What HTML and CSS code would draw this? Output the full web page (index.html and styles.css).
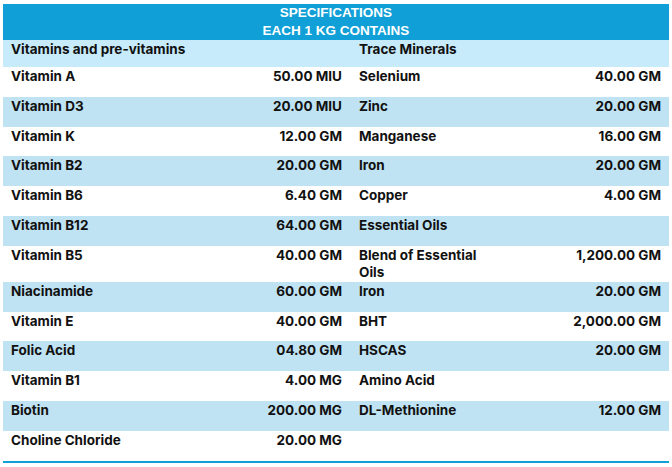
FILE: index.html
```html
<!DOCTYPE html>
<html>
<head>
<meta charset="utf-8">
<link rel="stylesheet" href="styles.css">
</head>
<body>
<div class="sheet">
  <div class="title">
    <div>SPECIFICATIONS</div>
    <div>EACH 1 KG CONTAINS</div>
  </div>
  <div class="row sub">
    <div class="name">Vitamins and pre-vitamins</div><div class="val"></div>
    <div class="name">Trace Minerals</div><div class="val"></div>
  </div>
  <div class="row">
    <div class="name">Vitamin A</div><div class="val">50.00 MIU</div>
    <div class="name">Selenium</div><div class="val">40.00 GM</div>
  </div>
  <div class="row band">
    <div class="name">Vitamin D3</div><div class="val">20.00 MIU</div>
    <div class="name">Zinc</div><div class="val">20.00 GM</div>
  </div>
  <div class="row short">
    <div class="name">Vitamin K</div><div class="val">12.00 GM</div>
    <div class="name">Manganese</div><div class="val">16.00 GM</div>
  </div>
  <div class="row band">
    <div class="name">Vitamin B2</div><div class="val">20.00 GM</div>
    <div class="name">Iron</div><div class="val">20.00 GM</div>
  </div>
  <div class="row">
    <div class="name">Vitamin B6</div><div class="val">6.40 GM</div>
    <div class="name">Copper</div><div class="val">4.00 GM</div>
  </div>
  <div class="row band">
    <div class="name">Vitamin B12</div><div class="val">64.00 GM</div>
    <div class="name">Essential Oils</div><div class="val"></div>
  </div>
  <div class="row tall">
    <div class="name">Vitamin B5</div><div class="val">40.00 GM</div>
    <div class="name">Blend of Essential Oils</div><div class="val">1,200.00 GM</div>
  </div>
  <div class="row band">
    <div class="name">Niacinamide</div><div class="val">60.00 GM</div>
    <div class="name">Iron</div><div class="val">20.00 GM</div>
  </div>
  <div class="row short">
    <div class="name">Vitamin E</div><div class="val">40.00 GM</div>
    <div class="name">BHT</div><div class="val">2,000.00 GM</div>
  </div>
  <div class="row band">
    <div class="name">Folic Acid</div><div class="val">04.80 GM</div>
    <div class="name">HSCAS</div><div class="val">20.00 GM</div>
  </div>
  <div class="row">
    <div class="name">Vitamin B1</div><div class="val">4.00 MG</div>
    <div class="name">Amino Acid</div><div class="val"></div>
  </div>
  <div class="row band">
    <div class="name">Biotin</div><div class="val">200.00 MG</div>
    <div class="name">DL-Methionine</div><div class="val">12.00 GM</div>
  </div>
  <div class="row last">
    <div class="name">Choline Chloride</div><div class="val">20.00 MG</div>
    <div class="name"></div><div class="val"></div>
  </div>
</div>
</body>
</html>
```

FILE: styles.css
```css
html, body {
  margin: 0;
  padding: 0;
  background: #ffffff;
}
.sheet {
  width: 666px;
  margin: 4px 0 0 3px;
  font-family: Inter, "Liberation Sans", sans-serif;
  font-weight: 700;
  font-size: 13.5px;
  color: #111111;
  border-bottom: 2px solid #109fd6;
}
.title {
  background: #109fd6;
  color: #ffffff;
  height: 36px;
  text-align: center;
  font-family: "Liberation Sans", Arial, sans-serif;
  font-size: 13.5px;
  line-height: 18px;
}
.row {
  display: grid;
  grid-template-columns: 240px 108px 140px 1fr;
  height: 30px;
  line-height: 17px;
}
.row.sub {
  background: #c7ebfa;
  height: 27px;
}
.row.band {
  background: #c0e3f3;
}
.row.short {
  height: 29px;
}
.row.tall {
  height: 36px;
}
.name {
  padding: 1px 0 0 8px;
}
.val {
  padding: 1px 9px 0 0;
  text-align: right;
  white-space: nowrap;
}
.val:last-child {
  padding-right: 8px;
}
```
